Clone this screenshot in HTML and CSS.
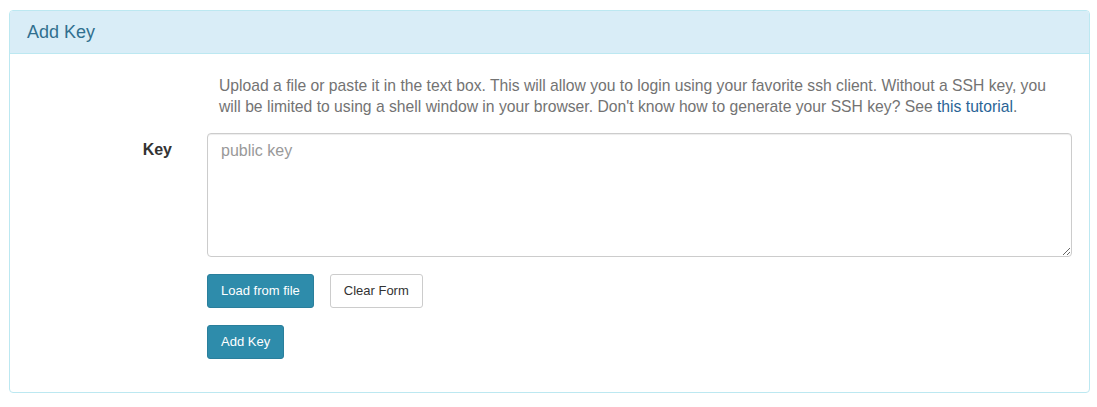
FILE: index.html
```html
<!DOCTYPE html>
<html>
<head>
<meta charset="utf-8">
<link rel="stylesheet" href="styles.css">
</head>
<body>
<div class="panel">
  <div class="panel-heading"><h3 class="panel-title">Add Key</h3></div>
  <div class="panel-body">
    <div class="offset">
      <p class="help">Upload a file or paste it in the text box. This will allow you to login using your favorite ssh client. Without a SSH key, you will be limited to using a shell window in your browser. Don't know how to generate your SSH key? See <a href="#" class="link">this tutorial</a>.</p>
    </div>
    <div class="row">
      <label class="label">Key</label>
      <div class="control">
        <textarea class="textarea" placeholder="public key"></textarea>
        <div class="btns">
          <button class="btn btn-info">Load from file</button>
          <button class="btn btn-default">Clear Form</button>
        </div>
        <div class="btns">
          <button class="btn btn-info">Add Key</button>
        </div>
      </div>
    </div>
  </div>
</div>
</body>
</html>
```
FILE: styles.css
```css
* { box-sizing: border-box; }
body {
  margin: 0;
  padding: 10px 8px 0 9px;
  font-family: "Liberation Sans", Arial, sans-serif;
  font-size: 14px;
  line-height: 20px;
  color: #333;
  background: #fff;
}
.panel {
  width: 1081px;
  border: 1px solid #bce8f1;
  border-radius: 4px;
  background: #fff;
}
.panel-heading {
  background: #d9edf7;
  border-bottom: 1px solid #bce8f1;
  border-radius: 3px 3px 0 0;
  padding: 10px 17px;
  color: #31708f;
}
.panel-title {
  margin: 0;
  font-size: 18px;
  font-weight: normal;
  line-height: 22px;
}
.panel-body {
  padding: 21px 17px 33px 17px;
}
.offset {
  margin-left: 180px;
  padding-left: 12px;
}
.help {
  margin: 0 0 16px 0;
  color: #737373;
  font-size: 15.7px;
  line-height: 21px;
}
.link { color: #2a6496; text-decoration: none; }
.row {
  display: flex;
  gap: 35px;
}
.label {
  width: 145px;
  flex: none;
  text-align: right;
  font-weight: bold;
  font-size: 16px;
  line-height: 22px;
  padding-top: 6px;
}
.control { flex: 1; }
.textarea {
  display: block;
  width: 100%;
  height: 124px;
  border: 1px solid #ccc;
  border-radius: 4px;
  padding: 6px 13px;
  font-family: "Liberation Sans", Arial, sans-serif;
  font-size: 16px;
  line-height: 22px;
  color: #555;
  box-shadow: inset 0 1px 1px rgba(0,0,0,.075);
}
.textarea::placeholder { color: #999; }
.btns {
  display: flex;
  gap: 16px;
  margin-top: 17px;
}
.btn {
  font-family: "Liberation Sans", Arial, sans-serif;
  font-size: 13px;
  line-height: 16px;
  padding: 8px 13px;
  border-radius: 3px;
  border: 1px solid transparent;
  cursor: pointer;
}
.btn-info {
  background: #2e8cab;
  border-color: #2a7f9c;
  color: #fff;
}
.btn-default {
  background: #fff;
  border-color: #ccc;
  color: #333;
}
```
